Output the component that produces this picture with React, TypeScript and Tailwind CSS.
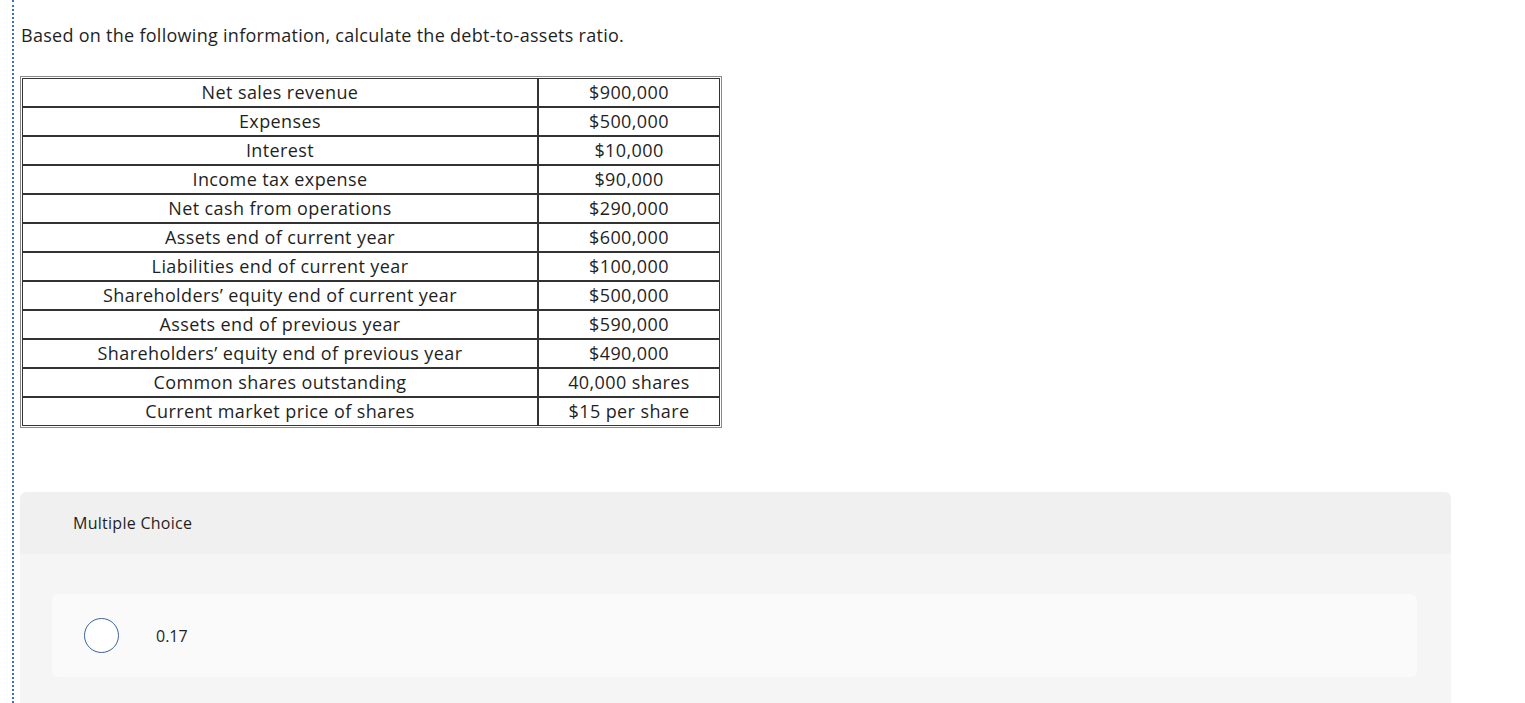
import React from 'react';

const rows: [string, string][] = [
  ['Net sales revenue', '$900,000'],
  ['Expenses', '$500,000'],
  ['Interest', '$10,000'],
  ['Income tax expense', '$90,000'],
  ['Net cash from operations', '$290,000'],
  ['Assets end of current year', '$600,000'],
  ['Liabilities end of current year', '$100,000'],
  ['Shareholders’ equity end of current year', '$500,000'],
  ['Assets end of previous year', '$590,000'],
  ['Shareholders’ equity end of previous year', '$490,000'],
  ['Common shares outstanding', '40,000 shares'],
  ['Current market price of shares', '$15 per share'],
];

export default function App() {
  return (
    <div className="min-h-[703px] bg-white font-['Open_Sans',Arial,sans-serif] text-[#1f1f1f]">
      <div className="ml-3 border-l-2 border-dotted border-[#3d6fc2] pl-[6px] pt-[24px] min-h-[703px]">
        <p className="text-[18px] leading-[22px] pl-px tracking-[0.28px]">
          Based on the following information, calculate the debt-to-assets ratio.
        </p>

        <div className="mt-[30px] inline-block border border-[#8a8a8a] p-px">
          <table className="border-separate border-spacing-0 text-[18px] tracking-[0.4px]">
            <tbody>
              {rows.map(([label, value]) => (
                <tr key={label}>
                  <td className="w-[516px] border border-[#333] h-[29px] text-center leading-[27px] p-0">
                    {label}
                  </td>
                  <td className="w-[182px] border border-[#333] h-[29px] text-center leading-[27px] p-0">
                    {value}
                  </td>
                </tr>
              ))}
            </tbody>
          </table>
        </div>

        <div className="mt-[58px] mr-[74px] rounded-t-md overflow-hidden">
          <div className="bg-[#f0f0f0] h-[62px] flex items-center pl-[53px] text-[16px] tracking-[0.27px]">
            Multiple Choice
          </div>
          <div className="bg-[#f5f5f5] pt-[40px] pb-[26px] pl-[32px] pr-[34px]">
            <div className="bg-[#fafafa] rounded-md h-[83px] flex items-center pl-[32px]">
              <span className="w-[35px] h-[35px] rounded-full border border-[#3a6399] bg-white" />
              <span className="ml-[37px] text-[16px]">0.17</span>
            </div>
          </div>
        </div>
      </div>
    </div>
  );
}
